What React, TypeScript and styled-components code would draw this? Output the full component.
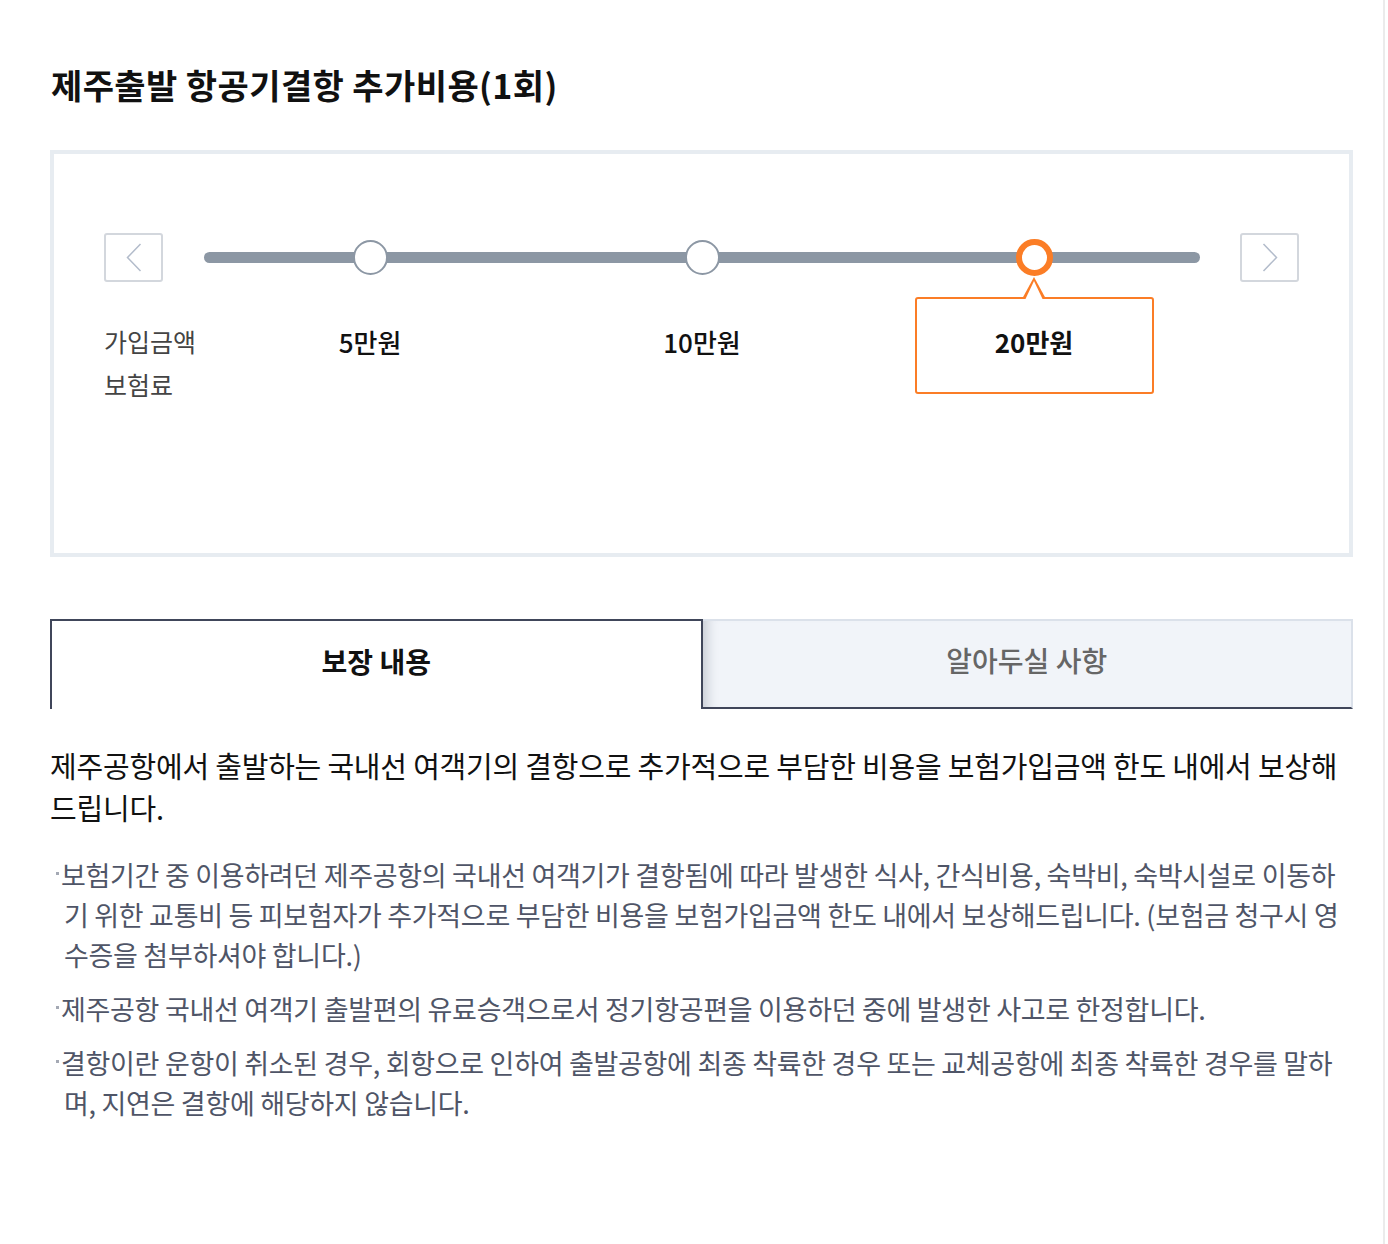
import styled, { createGlobalStyle } from "styled-components";

const colors = {
  TEXT: "#111111",
  SUB: "#4f5567",
  LABEL: "#444444",
  TRACK: "#8c97a4",
  ORANGE: "#fb7d26",
  BOX_BORDER: "#e7ecf1",
  TAB_DARK: "#40465a",
  TAB_LIGHT: "#dbe1ea",
  TAB_BG: "#f1f4f9",
};

const GlobalStyle = createGlobalStyle`
  html, body {
    margin: 0;
    padding: 0;
    background: #ffffff;
  }
  body {
    font-family: "Noto Sans CJK KR", "Noto Sans", sans-serif;
    color: ${colors.TEXT};
  }
  * {
    box-sizing: border-box;
  }
`;

const amounts = ["5만원", "10만원", "20만원"];
const activeIndex = 2;

const notes = [
  "보험기간 중 이용하려던 제주공항의 국내선 여객기가 결항됨에 따라 발생한 식사, 간식비용, 숙박비, 숙박시설로 이동하기 위한 교통비 등 피보험자가 추가적으로 부담한 비용을 보험가입금액 한도 내에서 보상해드립니다. (보험금 청구시 영수증을 첨부하셔야 합니다.)",
  "제주공항 국내선 여객기 출발편의 유료승객으로서 정기항공편을 이용하던 중에 발생한 사고로 한정합니다.",
  "결항이란 운항이 취소된 경우, 회항으로 인하여 출발공항에 최종 착륙한 경우 또는 교체공항에 최종 착륙한 경우를 말하며, 지연은 결항에 해당하지 않습니다.",
];

const Chevron = ({ dir }: { dir: "left" | "right" }) => (
  <svg width="16" height="29" viewBox="0 0 16 29" fill="none">
    <polyline
      points={dir === "left" ? "14.5,1 1.5,14.5 14.5,28" : "1.5,1 14.5,14.5 1.5,28"}
      stroke="#b3bccb"
      strokeWidth="1.5"
    />
  </svg>
);

const App = () => {
  return (
    <>
      <GlobalStyle />
      <Page>
        <Main>
          <Title>제주출발 항공기결항 추가비용(1회)</Title>

          <SliderBox>
            <SliderRow>
              <ArrowButton aria-label="이전">
                <Chevron dir="left" />
              </ArrowButton>
              <Track>
                {amounts.map((amount, i) => (
                  <Stop key={amount}>
                    <Knob $active={i === activeIndex} />
                  </Stop>
                ))}
              </Track>
              <ArrowButton aria-label="다음">
                <Chevron dir="right" />
              </ArrowButton>
            </SliderRow>

            <ValuesRow>
              <LabelColumn>
                <Cell>가입금액</Cell>
                <Cell>보험료</Cell>
              </LabelColumn>
              {amounts.map((amount, i) => (
                <ValueColumn key={amount}>
                  <ValueCard $active={i === activeIndex}>
                    <ValueCell $active={i === activeIndex}>{amount}</ValueCell>
                    <ValueCell $active={i === activeIndex} />
                  </ValueCard>
                </ValueColumn>
              ))}
            </ValuesRow>
          </SliderBox>

          <Tabs>
            <Tab $active>보장 내용</Tab>
            <Tab $active={false}>알아두실 사항</Tab>
          </Tabs>

          <Description>
            제주공항에서 출발하는 국내선 여객기의 결항으로 추가적으로 부담한 비용을 보험가입금액 한도 내에서 보상해드립니다.
          </Description>

          <NoteList>
            {notes.map((note) => (
              <NoteItem key={note}>{note}</NoteItem>
            ))}
          </NoteList>
        </Main>
        <ScrollEdge />
      </Page>
    </>
  );
};

export default App;

const Page = styled.div`
  display: flex;
  min-height: 1244px;
  width: 1388px;
`;

const Main = styled.main`
  width: 1385px;
  padding: 60px 30px 80px 50px;
  border-right: 2px solid #ebebeb;
`;

const ScrollEdge = styled.div`
  flex: 1;
`;

const Title = styled.h1`
  margin: 0 0 40px;
  padding-left: 1px;
  font-size: 34px;
  line-height: 50px;
  font-weight: 700;
  letter-spacing: 0.4px;
  color: ${colors.TEXT};
`;

const SliderBox = styled.section`
  height: 407px;
  border: 4px solid ${colors.BOX_BORDER};
  padding: 79px 50px 0;
`;

const SliderRow = styled.div`
  display: flex;
  align-items: center;
  column-gap: 41px;
`;

const ArrowButton = styled.button`
  display: flex;
  justify-content: center;
  align-items: center;
  flex-shrink: 0;
  width: 59px;
  height: 49px;
  padding: 0;
  background: #ffffff;
  border: 2px solid #d3d7dd;
  border-radius: 3px;
  cursor: pointer;

  &:last-child {
    margin-left: -1px;
  }
`;

const Track = styled.div`
  display: flex;
  align-items: center;
  width: 996px;
  height: 11px;
  border-radius: 6px;
  background: ${colors.TRACK};
`;

const Stop = styled.div`
  flex: 1;
  display: flex;
  justify-content: center;
  align-items: center;
  height: 11px;
`;

const Knob = styled.span<{ $active: boolean }>`
  flex-shrink: 0;
  width: ${(p) => (p.$active ? 37 : 35)}px;
  height: ${(p) => (p.$active ? 37 : 35)}px;
  border-radius: 50%;
  background: #ffffff;
  border: ${(p) => (p.$active ? `6px solid ${colors.ORANGE}` : `2px solid ${colors.TRACK}`)};
`;

const ValuesRow = styled.div`
  display: grid;
  grid-template-columns: 100px repeat(3, 332px);
  margin-top: 15px;
`;

const LabelColumn = styled.div`
  display: flex;
  flex-direction: column;
  padding-top: 23px;
`;

const Cell = styled.div`
  height: 43px;
  line-height: 43px;
  font-size: 25px;
  color: ${colors.LABEL};
`;

const ValueColumn = styled.div`
  display: flex;
  justify-content: center;
`;

const ValueCard = styled.div<{ $active: boolean }>`
  position: relative;
  width: 239px;
  height: 97px;
  padding-top: 21px;
  border: 2px solid ${(p) => (p.$active ? colors.ORANGE : "transparent")};
  border-radius: 3px;

  ${(p) =>
    p.$active &&
    `
    &::before {
      content: "";
      position: absolute;
      left: 50%;
      top: -22px;
      margin-left: -12px;
      width: 0;
      height: 0;
      border-left: 12px solid transparent;
      border-right: 12px solid transparent;
      border-bottom: 22px solid ${colors.ORANGE};
    }
    &::after {
      content: "";
      position: absolute;
      left: 50%;
      top: -18px;
      margin-left: -9px;
      width: 0;
      height: 0;
      border-left: 9px solid transparent;
      border-right: 9px solid transparent;
      border-bottom: 19px solid #ffffff;
    }
  `}
`;

const ValueCell = styled.div<{ $active: boolean }>`
  height: 43px;
  line-height: 43px;
  text-align: center;
  font-size: 26px;
  font-weight: ${(p) => (p.$active ? 700 : 500)};
  color: ${colors.TEXT};
`;

const Tabs = styled.div`
  display: flex;
  margin-top: 62px;
`;

const Tab = styled.div<{ $active: boolean }>`
  flex: 1;
  display: flex;
  justify-content: center;
  align-items: center;
  height: 90px;
  padding-bottom: 8px;
  font-size: 28px;
  font-weight: ${(p) => (p.$active ? 700 : 500)};
  color: ${(p) => (p.$active ? colors.TEXT : "#666666")};
  background: ${(p) => (p.$active ? "#ffffff" : colors.TAB_BG)};
  border: 2px solid ${(p) => (p.$active ? colors.TAB_DARK : colors.TAB_LIGHT)};
  border-bottom: ${(p) => (p.$active ? "0" : `2px solid ${colors.TAB_DARK}`)};
  border-left-width: ${(p) => (p.$active ? "2px" : "0")};
  box-shadow: ${(p) => (p.$active ? "none" : "inset 14px 0 12px -10px rgba(40, 50, 70, 0.22)")};
`;

const Description = styled.p`
  margin: 35px 0 0;
  font-size: 29px;
  line-height: 42px;
  letter-spacing: -0.2px;
  color: ${colors.TEXT};
`;

const NoteList = styled.ul`
  list-style: none;
  margin: 27px 0 0;
  padding: 0;
`;

const NoteItem = styled.li`
  position: relative;
  padding-left: 14px;
  text-indent: -3px;
  font-size: 27px;
  line-height: 40px;
  letter-spacing: -0.3px;
  color: ${colors.SUB};

  & + & {
    margin-top: 14px;
  }

  &::before {
    content: "";
    position: absolute;
    left: 6px;
    top: 17px;
    width: 3px;
    height: 3px;
    background: #a4a9b4;
  }
`;
